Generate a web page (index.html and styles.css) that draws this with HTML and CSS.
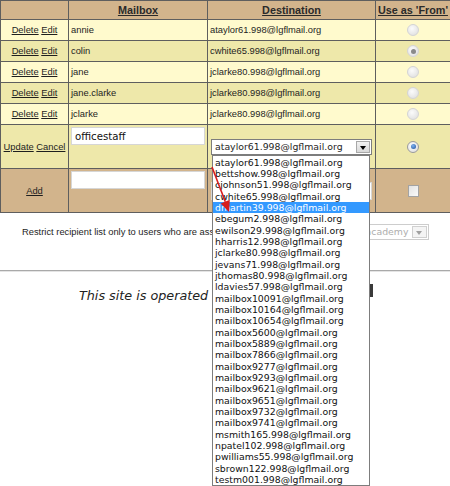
FILE: index.html
```html
<!DOCTYPE html>
<html lang="en">
<head>
  <meta charset="UTF-8">
  <title>Mailboxes</title>
  <link rel="stylesheet" href="styles.css">
</head>
<body>
  <table class="mailboxes">
    <colgroup>
      <col class="c-act"><col class="c-box"><col class="c-dest"><col class="c-from">
    </colgroup>
    <tr class="head">
      <th></th><th>Mailbox</th><th>Destination</th><th>Use as 'From'</th>
    </tr>
    <tr class="light">
      <td class="act"><a href="#">Delete</a> <a href="#">Edit</a></td>
      <td>annie</td>
      <td>ataylor61.998@lgflmail.org</td>
      <td class="from"><span class="radio"></span></td>
    </tr>
    <tr class="dark">
      <td class="act"><a href="#">Delete</a> <a href="#">Edit</a></td>
      <td>colin</td>
      <td>cwhite65.998@lgflmail.org</td>
      <td class="from"><span class="radio grey"></span></td>
    </tr>
    <tr class="light">
      <td class="act"><a href="#">Delete</a> <a href="#">Edit</a></td>
      <td>jane</td>
      <td>jclarke80.998@lgflmail.org</td>
      <td class="from"><span class="radio"></span></td>
    </tr>
    <tr class="dark">
      <td class="act"><a href="#">Delete</a> <a href="#">Edit</a></td>
      <td>jane.clarke</td>
      <td>jclarke80.998@lgflmail.org</td>
      <td class="from"><span class="radio"></span></td>
    </tr>
    <tr class="light">
      <td class="act"><a href="#">Delete</a> <a href="#">Edit</a></td>
      <td>jclarke</td>
      <td>jclarke80.998@lgflmail.org</td>
      <td class="from"><span class="radio"></span></td>
    </tr>
    <tr class="edit">
      <td class="act"><a href="#">Update</a> <a href="#">Cancel</a></td>
      <td class="top"><input class="field" type="text" value="officestaff"></td>
      <td>
        <div class="combo">
          <div class="select">
            <span class="label">ataylor61.998@lgflmail.org</span>
            <span class="drop"></span>
          </div>
          <ul class="options">
            <li>ataylor61.998@lgflmail.org</li>
            <li>bettshow.998@lgflmail.org</li>
            <li>cjohnson51.998@lgflmail.org</li>
            <li>cwhite65.998@lgflmail.org</li>
            <li class="hl">dmartin39.998@lgflmail.org</li>
            <li>ebegum2.998@lgflmail.org</li>
            <li>ewilson29.998@lgflmail.org</li>
            <li>hharris12.998@lgflmail.org</li>
            <li>jclarke80.998@lgflmail.org</li>
            <li>jevans71.998@lgflmail.org</li>
            <li>jthomas80.998@lgflmail.org</li>
            <li>ldavies57.998@lgflmail.org</li>
            <li>mailbox10091@lgflmail.org</li>
            <li>mailbox10164@lgflmail.org</li>
            <li>mailbox10654@lgflmail.org</li>
            <li>mailbox5600@lgflmail.org</li>
            <li>mailbox5889@lgflmail.org</li>
            <li>mailbox7866@lgflmail.org</li>
            <li>mailbox9277@lgflmail.org</li>
            <li>mailbox9293@lgflmail.org</li>
            <li>mailbox9621@lgflmail.org</li>
            <li>mailbox9651@lgflmail.org</li>
            <li>mailbox9732@lgflmail.org</li>
            <li>mailbox9741@lgflmail.org</li>
            <li>msmith165.998@lgflmail.org</li>
            <li>npatel102.998@lgflmail.org</li>
            <li>pwilliams55.998@lgflmail.org</li>
            <li>sbrown122.998@lgflmail.org</li>
            <li>testm001.998@lgflmail.org</li>
          </ul>
          <!-- red pointer drawn over the open list -->
          <svg class="pointer" width="30" height="60" viewBox="0 0 30 60">
            <line x1="5" y1="8" x2="18.3" y2="42.7" stroke="#d81e1e" stroke-width="1.6"/>
            <polygon points="22,53 22.8,40.8 13.8,44.4" fill="#d81e1e"/>
          </svg>
        </div>
      </td>
      <td class="from"><span class="radio blue"></span></td>
    </tr>
    <tr class="add">
      <td class="act"><a href="#">Add</a></td>
      <td class="top"><input class="field" type="text"></td>
      <td><input class="field wide" type="text"></td>
      <td class="from"><span class="check"></span></td>
    </tr>
  </table>

  <div class="restrict">
    <span>Restrict recipient list only to users who are associated with</span>
    <div class="select off">
      <span class="label">Oakfield academy</span>
      <span class="drop"></span>
    </div>
  </div>

  <div class="rule"></div>

  <p class="footer">This site is operated by London Grid<span class="mark"></span></p>
</body>
</html>
```

FILE: styles.css
```css
html, body {
  min-height: 486px;
}
body {
  margin: 0;
  background: #fff;
  color: #1e1e1e;
  font-family: "Liberation Sans", Arial, sans-serif;
  font-size: 9.35px;
}
a {
  color: #1e1e1e;
  text-decoration: underline;
}

.mailboxes {
  width: 450px;
  table-layout: fixed;
  border-collapse: collapse;
}
.mailboxes col.c-act { width: 68px; }
.mailboxes col.c-box { width: 139px; }
.mailboxes col.c-dest { width: 168px; }
.mailboxes col.c-from { width: 75px; }
.mailboxes th, .mailboxes td {
  border: 1px solid #5e5e5e;
  padding: 0 2px;
  white-space: nowrap;
}
.mailboxes th {
  height: 18px;
  padding: 0;
  background: #d2b48c;
  font-size: 10.8px;
  font-weight: bold;
  text-decoration: underline;
  color: #2a2a2a;
}
.mailboxes td {
  height: 20px;
}
.mailboxes tr.light td { background: #fffacd; }
.mailboxes tr.dark td, .mailboxes tr.edit td { background: #eee8aa; }
.mailboxes tr.add td { background: #d2b48c; }
.mailboxes tr.edit td, .mailboxes tr.add td { height: 41px; }
.mailboxes td.act, .mailboxes td.from { text-align: center; }
.mailboxes td.top {
  vertical-align: top;
  padding-top: 2px;
}

.field {
  box-sizing: border-box;
  width: 134px;
  height: 18px;
  margin: 0;
  padding: 0 3px;
  border: 1px solid #d6d6d6;
  background: #fff;
  font-family: "DejaVu Sans", Verdana, sans-serif;
  font-size: 10.2px;
  color: #111;
  outline: none;
}
.field.wide {
  width: 161px;
  margin-left: 1px;
}

/* radio buttons and checkbox, grey XP look */
.radio {
  position: relative;
  display: inline-block;
  box-sizing: border-box;
  width: 12px;
  height: 12px;
  border: 1px solid #d4d4d4;
  border-radius: 50%;
  background: radial-gradient(circle at 40% 35%, #fbfbfb, #dcdcdc);
  vertical-align: middle;
}
.radio.grey::after, .radio.blue::after {
  content: "";
  position: absolute;
  left: 2.5px;
  top: 2.5px;
  width: 5px;
  height: 5px;
  border-radius: 50%;
  background: #8a8a8a;
}
.radio.blue {
  border-color: #9a9a9a;
}
.radio.blue::after {
  background: radial-gradient(circle at 40% 35%, #7fb2f0, #1c4f9c);
}
.check {
  display: inline-block;
  box-sizing: border-box;
  width: 11px;
  height: 12px;
  border: 1px solid #a3a3a3;
  background: linear-gradient(135deg, #e2e2e2, #fafafa);
  vertical-align: middle;
}

/* combo box */
.combo {
  position: relative;
  width: 161px;
  margin-left: 1px;
}
.select {
  display: flex;
  box-sizing: border-box;
  height: 16px;
  border: 1px solid #7d7d7d;
  background: #fff;
  font-family: "DejaVu Sans", Verdana, sans-serif;
  font-size: 9.35px;
  line-height: 14px;
}
.select .label {
  flex: 1;
  padding-left: 3px;
  overflow: hidden;
}
.select .drop {
  position: relative;
  box-sizing: border-box;
  width: 14px;
  margin: 1px;
  border: 1px solid #a8a8a8;
  background: linear-gradient(#f2f2f2, #d9d9d9);
}
.select .drop::after {
  content: "";
  position: absolute;
  left: 3px;
  top: 4px;
  border-left: 3.5px solid transparent;
  border-right: 3.5px solid transparent;
  border-top: 4px solid #000;
}
.select.off {
  width: 162px;
  border-color: #cdcdcd;
  color: #adadad;
}
.select.off .label {
  text-align: right;
  padding-right: 3px;
}
.select.off .drop {
  width: 15px;
  border-color: #d0d0d0;
  background: #f4f4f4;
}
.select.off .drop::after {
  border-top-color: #a0a0a0;
}

.options {
  position: absolute;
  z-index: 5;
  top: 100%;
  left: 1px;
  width: 158px;
  box-sizing: border-box;
  margin: 0;
  padding: 1px 0 0;
  list-style: none;
  border: 1px solid #7d7d7d;
  background: #fff;
  font-family: "DejaVu Sans", Verdana, sans-serif;
  font-size: 9.35px;
  line-height: 11.35px;
  color: #111;
}
.options li {
  padding-left: 2px;
  white-space: nowrap;
}
.options li.hl {
  background: #3399ff;
  color: #fff;
}
.pointer {
  position: absolute;
  z-index: 6;
  left: -4px;
  top: 20px;
}

.restrict {
  display: flex;
  align-items: center;
  gap: 4px;
  margin-top: 11px;
  padding-left: 22px;
  white-space: nowrap;
}

.rule {
  margin-top: 30px;
  border-top: 1px solid #a9a9a9;
  border-bottom: 1px solid #e4e4e4;
}

.footer {
  position: relative;
  margin: 16px 0 0;
  padding-left: 79px;
  font-family: "DejaVu Sans", Verdana, sans-serif;
  font-size: 12.75px;
  font-style: italic;
  line-height: 15px;
  color: #222;
}
.footer .mark {
  position: absolute;
  left: 370px;
  top: -4px;
  width: 3px;
  height: 13px;
  background: #3a3a3a;
}
```
